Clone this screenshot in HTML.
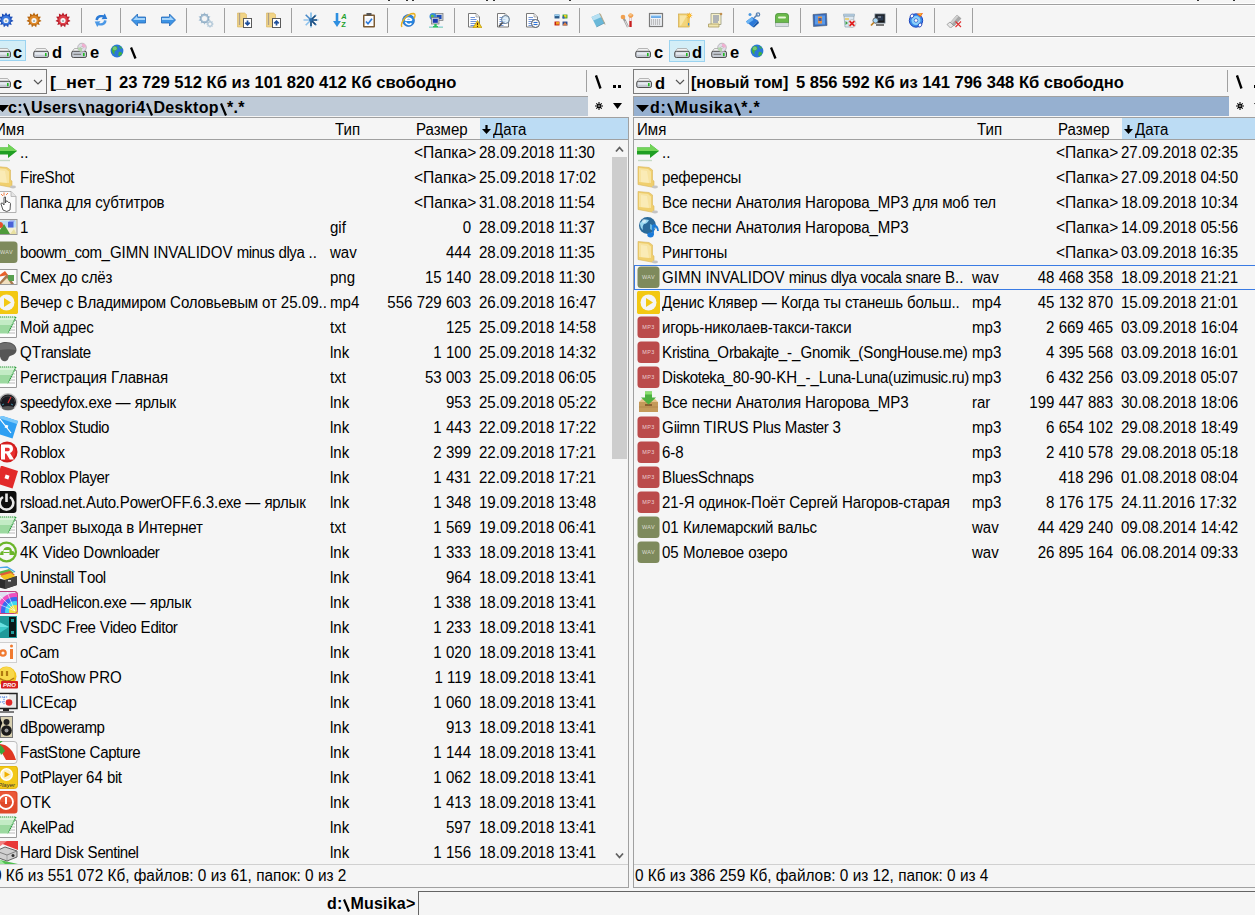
<!DOCTYPE html><html><head><meta charset="utf-8"><style>
html,body{margin:0;padding:0;width:1255px;height:915px;overflow:hidden;background:#f5f5f5;}
body>div,body>svg{position:absolute;} svg{overflow:hidden} svg.ov{overflow:visible}
.t{position:absolute;font-family:"Liberation Sans",sans-serif;font-size:16px;line-height:25px;color:#000;white-space:pre;transform-origin:0 0;}
.lat{letter-spacing:-0.5px} .cyr{letter-spacing:-0.2px}
.b{position:absolute;font-family:"Liberation Sans",sans-serif;font-size:16px;font-weight:bold;line-height:20px;color:#000;white-space:pre;transform-origin:0 0;}

</style></head><body>
<div style="left:0px;top:3px;width:1255px;height:1px;background:#fdfdfd"></div>
<div style="left:0px;top:4px;width:1255px;height:1px;background:#a0a0a0"></div>
<div style="left:0px;top:5px;width:1255px;height:1px;background:#fdfdfd"></div>
<div style="left:0px;top:35px;width:1255px;height:1px;background:#fdfdfd"></div>
<div style="left:0px;top:36px;width:1255px;height:1px;background:#a0a0a0"></div>
<div style="left:0px;top:37px;width:1255px;height:1px;background:#fdfdfd"></div>
<div style="left:0px;top:65px;width:1255px;height:1px;background:#fdfdfd"></div>
<div style="left:0px;top:66px;width:1255px;height:1px;background:#a0a0a0"></div>
<div style="left:0px;top:67px;width:1255px;height:1px;background:#fdfdfd"></div>
<div style="left:388px;top:0px;width:2px;height:1px;background:#333"></div>
<div style="left:406px;top:0px;width:2px;height:1px;background:#333"></div>
<div style="left:412px;top:0px;width:2px;height:1px;background:#333"></div>
<div style="left:486px;top:0px;width:2px;height:1px;background:#333"></div>
<div style="left:493px;top:0px;width:2px;height:1px;background:#333"></div>
<div style="left:569px;top:0px;width:2px;height:1px;background:#333"></div>
<div style="left:1197px;top:0px;width:2px;height:1px;background:#333"></div>
<div style="left:1233px;top:0px;width:2px;height:1px;background:#333"></div>
<svg style="left:-2px;top:12px" width="16" height="16" viewBox="0 0 16 16"><polygon points="8.00,0.40 9.47,3.01 12.11,1.61 11.93,4.59 14.91,4.84 13.15,7.26 15.52,9.08 12.73,10.16 13.74,12.98 10.81,12.37 10.14,15.29 8.00,13.20 5.86,15.29 5.19,12.37 2.26,12.98 3.27,10.16 0.48,9.08 2.85,7.26 1.09,4.84 4.07,4.59 3.89,1.61 6.53,3.01" fill="#1d4fb8"/><circle cx="8" cy="8" r="4.6" fill="#3d7ae0"/><circle cx="8" cy="8.5" r="2.6" fill="#f4f4f4"/><circle cx="8" cy="9" r="1" fill="#9aa"/></svg>
<svg style="left:26px;top:12px" width="16" height="16" viewBox="0 0 16 16"><polygon points="8.00,0.40 9.47,3.01 12.11,1.61 11.93,4.59 14.91,4.84 13.15,7.26 15.52,9.08 12.73,10.16 13.74,12.98 10.81,12.37 10.14,15.29 8.00,13.20 5.86,15.29 5.19,12.37 2.26,12.98 3.27,10.16 0.48,9.08 2.85,7.26 1.09,4.84 4.07,4.59 3.89,1.61 6.53,3.01" fill="#b8660e"/><circle cx="8" cy="8" r="4.6" fill="#e08a2a"/><circle cx="8" cy="8.5" r="2.6" fill="#f4f4f4"/><circle cx="8" cy="9" r="1" fill="#9aa"/></svg>
<svg style="left:55px;top:12px" width="16" height="16" viewBox="0 0 16 16"><polygon points="8.00,0.40 9.47,3.01 12.11,1.61 11.93,4.59 14.91,4.84 13.15,7.26 15.52,9.08 12.73,10.16 13.74,12.98 10.81,12.37 10.14,15.29 8.00,13.20 5.86,15.29 5.19,12.37 2.26,12.98 3.27,10.16 0.48,9.08 2.85,7.26 1.09,4.84 4.07,4.59 3.89,1.61 6.53,3.01" fill="#b81d2a"/><circle cx="8" cy="8" r="4.6" fill="#e0404a"/><circle cx="8" cy="8.5" r="2.6" fill="#f4f4f4"/><circle cx="8" cy="9" r="1" fill="#9aa"/></svg>
<svg style="left:93px;top:12px" width="16" height="16" viewBox="0 0 16 16"><path d="M2.5 8 C2.5 4 6.5 2 10.5 3.3 L11.8 1.5 L14.3 7 L8.5 7.2 L9.8 5.5 C7.5 4.6 5.2 5.8 5 8.2 Z" fill="#2b7bd6"/><path d="M13.5 8.5 C13.5 12.5 9.5 14.5 5.5 13.2 L4.2 15 L1.7 9.5 L7.5 9.3 L6.2 11 C8.5 11.9 10.8 10.7 11 8.3 Z" fill="#4b98e6"/></svg>
<svg style="left:131px;top:12px" width="16" height="16" viewBox="0 0 16 16"><path d="M0.5 8 L6.5 2 L6.5 5 L14.5 5 L14.5 11 L6.5 11 L6.5 14 Z" fill="#3d93e4" stroke="#2368b8" stroke-width="0.8" stroke-linejoin="round"/><path d="M2.5 7.5 L6 4 L6.5 6 L14 6 L14 8 L2.5 8Z" fill="#a6d4fa"/></svg>
<svg style="left:160px;top:12px" width="16" height="16" viewBox="0 0 16 16"><path d="M15.5 8 L9.5 2 L9.5 5 L1.5 5 L1.5 11 L9.5 11 L9.5 14 Z" fill="#3d93e4" stroke="#2368b8" stroke-width="0.8" stroke-linejoin="round"/><path d="M13.5 7.5 L10 4 L9.5 6 L2 6 L2 8 L13.5 8Z" fill="#a6d4fa"/></svg>
<svg style="left:198px;top:12px" width="16" height="16" viewBox="0 0 16 16"><polygon points="6.50,0.20 7.80,2.51 10.20,1.40 9.90,4.03 12.49,4.55 10.70,6.50 12.49,8.45 9.90,8.97 10.20,11.60 7.80,10.49 6.50,12.80 5.20,10.49 2.80,11.60 3.10,8.97 0.51,8.45 2.30,6.50 0.51,4.55 3.10,4.03 2.80,1.40 5.20,2.51" fill="#a9c2d6"/><circle cx="6.5" cy="6.5" r="2.6" fill="#f5f5f5"/><circle cx="6.5" cy="6.5" r="4.2" fill="none" stroke="#8aa6bc" stroke-width="0.8"/><polygon points="12.00,8.00 12.99,9.60 14.83,9.17 14.40,11.01 16.00,12.00 14.40,12.99 14.83,14.83 12.99,14.40 12.00,16.00 11.01,14.40 9.17,14.83 9.60,12.99 8.00,12.00 9.60,11.01 9.17,9.17 11.01,9.60" fill="#b2c8d8"/><circle cx="12" cy="12" r="1.5" fill="#f5f5f5"/></svg>
<svg style="left:236px;top:12px" width="16" height="16" viewBox="0 0 16 16"><path d="M1.5 1 h7 l2 1.5 v12.5 h-9z" fill="#f1d486" stroke="#d8b45c" stroke-width="0.6"/><path d="M3.5 1.5 v11.5" stroke="#6a6a8a" stroke-width="1.3" stroke-dasharray="1 1"/><rect x="7.5" y="6.5" width="8" height="9" fill="#fff" stroke="#5a5a5a" stroke-width="1"/><path d="M11.5 8.5 v4 M9.3 10.7 l2.2 2.2 l2.2 -2.2" stroke="#1f4f9a" stroke-width="1.7" fill="none"/></svg>
<svg style="left:265px;top:12px" width="16" height="16" viewBox="0 0 16 16"><path d="M1.5 1 h7 l2 1.5 v12.5 h-9z" fill="#f1d486" stroke="#d8b45c" stroke-width="0.6"/><path d="M3.5 1.5 v11.5" stroke="#6a6a8a" stroke-width="1.3" stroke-dasharray="1 1"/><rect x="7.5" y="6.5" width="8" height="9" fill="#fff" stroke="#5a5a5a" stroke-width="1"/><path d="M11.5 13.5 v-4 M9.3 11.3 l2.2 -2.2 l2.2 2.2" stroke="#1f4f9a" stroke-width="1.7" fill="none"/></svg>
<svg style="left:303px;top:12px" width="16" height="16" viewBox="0 0 16 16"><g stroke-width="1.6"><path d="M8 0.5v15" stroke="#7ab8e8"/><path d="M0.5 8h15" stroke="#9ac8ee"/><path d="M2.7 2.7l10.6 10.6" stroke="#4a8ac8"/><path d="M13.3 2.7L2.7 13.3" stroke="#8ac0ec"/></g><path d="M8 8 L14 8 M8 8 L12.5 12.5 M8 8 L8 14 M8 8 L12.5 3.5" stroke="#1a4a7a" stroke-width="1.6"/><circle cx="8" cy="8" r="1.8" fill="#2a6aa8"/></svg>
<svg style="left:332px;top:12px" width="16" height="16" viewBox="0 0 16 16"><path d="M5 1 v10" stroke="#2e8fe0" stroke-width="2.6"/><path d="M1 9 L5 15 L9 9Z" fill="#2e8fe0"/><text x="9.3" y="7" font-size="7.5" font-weight="bold" font-style="italic" font-family="Liberation Sans" fill="#22a02a">A</text><text x="9.3" y="15.3" font-size="7.5" font-weight="bold" font-family="Liberation Sans" fill="#22a02a">Z</text></svg>
<svg style="left:361px;top:12px" width="16" height="16" viewBox="0 0 16 16"><rect x="2" y="2.5" width="12" height="13" rx="1" fill="#7b5a32"/><rect x="3.5" y="4" width="9" height="10" fill="#fff"/><path d="M4.5 7h7M4.5 9h7M4.5 11h7" stroke="#d8e0f0" stroke-width="0.7"/><rect x="5.5" y="1" width="5" height="2.5" fill="#555"/><path d="M5 9.5 l2 2.3 l4 -5" stroke="#2a78d8" stroke-width="1.6" fill="none"/></svg>
<svg style="left:400px;top:12px" width="16" height="16" viewBox="0 0 16 16"><circle cx="8.5" cy="8.5" r="6" fill="#2a86e0"/><circle cx="8.5" cy="8.5" r="6" fill="none" stroke="#1a5ab0" stroke-width="0.6"/><path d="M5.3 8.2 h6.5 M5.5 8.5 a3.3 3.3 0 0 1 6.3 -0.3" stroke="#fff" stroke-width="1.6" fill="none"/><path d="M5.6 9.8 a3.3 3.3 0 0 0 5.8 1.4" stroke="#fff" stroke-width="1.5" fill="none"/><path d="M2 15 C-0.5 11 7 1.5 13.5 1.5 C16 2 15 5 13.8 6.5" stroke="#e8b020" stroke-width="1.4" fill="none"/></svg>
<svg style="left:428px;top:12px" width="16" height="16" viewBox="0 0 16 16"><rect x="7" y="1.5" width="8" height="7" fill="#c8d0d8" stroke="#777" stroke-width="0.7"/><rect x="8.5" y="3" width="5" height="4" fill="#1a4ab8"/><circle cx="5" cy="4.5" r="3.5" fill="#3a8ad8"/><path d="M3 3 q2 -1 3 1 q-1 2 -3 1z" fill="#5ac040"/><rect x="3.5" y="5.5" width="7.5" height="6.5" fill="#d0d8e0" stroke="#777" stroke-width="0.7"/><rect x="4.8" y="6.8" width="5" height="4" fill="#1a3ab0"/><rect x="6.3" y="12" width="2.4" height="2" fill="#2ac060"/><path d="M1 14.8 H15" stroke="#2ac060" stroke-width="1.6"/><path d="M1 14.8 H5 M10 14.8 H15" stroke="#bde" stroke-width="1.6"/></svg>
<svg style="left:466px;top:12px" width="16" height="16" viewBox="0 0 16 16"><path d="M2.5 1.5 h7.5 l3.5 3.5 v10 h-11z" fill="#fff" stroke="#6a6a6a" stroke-width="0.9"/><path d="M10 1.5 v3.5 h3.5" fill="#e8e8e8" stroke="#8a8a8a" stroke-width="0.6"/><path d="M4.5 5.5h4.5M4.5 7.5h6M4.5 9.5h6M4.5 11.5h6M4.5 13.5h4" stroke="#4a7ad0" stroke-width="0.8"/><path d="M11.5 8.5 L16 15.8 H7 Z" fill="#f4d020" stroke="#b89000" stroke-width="0.7" stroke-linejoin="round"/><path d="M11.5 10.8v2.4M11.5 14v0.9" stroke="#5a1a00" stroke-width="1.1"/></svg>
<svg style="left:495px;top:12px" width="16" height="16" viewBox="0 0 16 16"><path d="M2.5 1.5 h7.5 l3.5 3.5 v10 h-11z" fill="#fff" stroke="#6a6a6a" stroke-width="0.9"/><path d="M10 1.5 v3.5 h3.5" fill="#e8e8e8" stroke="#8a8a8a" stroke-width="0.6"/><path d="M4.5 5.5h4.5M4.5 7.5h6M4.5 9.5h6M4.5 11.5h6M4.5 13.5h4" stroke="#4a7ad0" stroke-width="0.8"/><circle cx="10.5" cy="7.5" r="4" fill="#d8ecfa" fill-opacity="0.75" stroke="#607890" stroke-width="1"/><path d="M7.5 10.5 L4 14.5" stroke="#505050" stroke-width="1.6"/></svg>
<svg style="left:524px;top:12px" width="16" height="16" viewBox="0 0 16 16"><path d="M2.5 1.5 h7.5 l3.5 3.5 v10 h-11z" fill="#fff" stroke="#6a6a6a" stroke-width="0.9"/><path d="M10 1.5 v3.5 h3.5" fill="#e8e8e8" stroke="#8a8a8a" stroke-width="0.6"/><path d="M4.5 5.5h4.5M4.5 7.5h6M4.5 9.5h6M4.5 11.5h6M4.5 13.5h4" stroke="#4a7ad0" stroke-width="0.8"/><circle cx="11.5" cy="11.5" r="4" fill="#f6f6f6" stroke="#505a68" stroke-width="1"/><path d="M9.5 10.5h4M9.5 12.5h4" stroke="#2a72d8" stroke-width="1.2"/></svg>
<svg style="left:553px;top:12px" width="16" height="16" viewBox="0 0 16 16"><rect x="1" y="2" width="6" height="5" fill="#fff"/><rect x="9" y="2" width="6" height="5" fill="#fff"/><rect x="1" y="9" width="6" height="5" fill="#fff"/><rect x="9" y="9" width="6" height="5" fill="#fff"/><rect x="1.5" y="2.5" width="5" height="4" fill="#2a5a8a"/><rect x="1.5" y="2.5" width="5" height="1.6" fill="#9ad0f0"/><rect x="9.5" y="2.5" width="5" height="4" fill="#40a030"/><rect x="11" y="3" width="2.5" height="2.5" fill="#f0d020"/><rect x="9.5" y="4.5" width="2" height="2" fill="#3050d0"/><rect x="1.5" y="9.5" width="5" height="4" fill="#c02010"/><rect x="3" y="10" width="3" height="2.5" fill="#f0a020"/><rect x="9.5" y="9.5" width="5" height="4" fill="#2a4a90"/><path d="M9.5 13.5 L12 10 L14.5 13.5Z" fill="#e08040"/></svg>
<svg style="left:590px;top:12px" width="16" height="16" viewBox="0 0 16 16"><path d="M1.5 5 L9.5 1.5 L14.5 11 L6.5 15Z" fill="#6ab8d8"/><path d="M1.5 5 L9.5 1.5 L11.5 5 L3.5 8.5Z" fill="#b6e0f2"/><path d="M9.5 1.5 L14.5 11 L15 12.5 L10.5 2Z" fill="#d8c8a0" stroke="#a89878" stroke-width="0.5"/><path d="M6.5 15 L14.5 11" stroke="#4a88a8" stroke-width="0.6"/></svg>
<svg style="left:620px;top:12px" width="16" height="16" viewBox="0 0 16 16"><path d="M3.5 6 L8 15" stroke="#9a9a9a" stroke-width="2.2"/><path d="M5 9 L8 15" stroke="#e0e0e0" stroke-width="1"/><path d="M10.5 5 L10.5 15" stroke="#c82020" stroke-width="2.4"/><path d="M10.5 5 L10.5 9" stroke="#eee" stroke-width="2.4"/><circle cx="3" cy="5" r="2.3" fill="#f0a050"/><path d="M8 3 q2.5 -3 5.5 0 q0 2 -2.5 3 q-2.5 0 -3 -3z" fill="#f0a050"/><circle cx="10.5" cy="2.5" r="1.5" fill="#f8c080"/></svg>
<svg style="left:648px;top:12px" width="16" height="16" viewBox="0 0 16 16"><rect x="1.5" y="1.5" width="13" height="13" fill="#f0f2f6" stroke="#7a7a7a" stroke-width="1.2"/><rect x="3" y="3" width="10" height="3" fill="#6aaae8"/><rect x="3" y="3" width="10" height="1.2" fill="#b8dcf8"/><path d="M3 8h10M3 10h10M3 12h10" stroke="#8a8a8a" stroke-width="1.1" stroke-dasharray="1.2 0.8"/></svg>
<svg style="left:677px;top:12px" width="16" height="16" viewBox="0 0 16 16"><rect x="1.5" y="2" width="10.5" height="13" fill="#f2d47a" stroke="#d0a848" stroke-width="0.7"/><path d="M3 3.5 h7 l-6 10 h-1z" fill="#f8e6a8"/><rect x="10.5" y="5" width="2" height="10" fill="#e8c058"/><polygon points="12.50,0.10 13.00,2.30 14.90,1.10 13.70,3.00 15.90,3.50 13.70,4.00 14.90,5.90 13.00,4.70 12.50,6.90 12.00,4.70 10.10,5.90 11.30,4.00 9.10,3.50 11.30,3.00 10.10,1.10 12.00,2.30" fill="#f5a010"/><circle cx="12.5" cy="3.5" r="1.3" fill="#ffd040"/><rect x="11" y="11" width="1.2" height="2.5" fill="#3a8ad8"/></svg>
<svg style="left:707px;top:12px" width="16" height="16" viewBox="0 0 16 16"><path d="M4 1.5 h10 v11 h-10z" fill="#f6f0c8" stroke="#9a9a80" stroke-width="0.8"/><path d="M1.5 12 h10.5 v3 h-10.5z" fill="#f0e6b0" stroke="#a89a60" stroke-width="0.8"/><path d="M6 4h6M6 6h6M6 8h6M6 10h5" stroke="#5a6aa0" stroke-width="0.9"/><circle cx="14" cy="2" r="1.3" fill="#c09050"/></svg>
<svg style="left:745px;top:12px" width="16" height="16" viewBox="0 0 16 16"><path d="M1 9.5 L7 5 L13 8.5 L7.5 15Z" fill="#2a78d8"/><path d="M1 9.5 L7 5 L8.5 8 L2.5 12Z" fill="#6ab4f4"/><path d="M7.5 15 L13 8.5 L14 11 L9 15.5Z" fill="#1a58a8"/><path d="M9 6 L12.5 2.5" stroke="#5a84b4" stroke-width="1.6"/><circle cx="13" cy="2.5" r="1.7" fill="none" stroke="#5a84b4" stroke-width="1.2"/><circle cx="5" cy="2.5" r="1.5" fill="#4a98e0"/></svg>
<svg style="left:774px;top:12px" width="16" height="16" viewBox="0 0 16 16"><path d="M1.5 4 Q1.5 1.5 4 1.5 H12 Q14.5 1.5 14.5 4 V11 H1.5Z" fill="#6ab84a" stroke="#3a8a2a" stroke-width="0.7"/><rect x="4" y="4.5" width="8" height="2" rx="1" fill="#e8f8d8"/><path d="M1.5 11 h13 v3.5 h-13z" fill="#f4f4f4" stroke="#8a9a9a" stroke-width="0.6"/><path d="M3 12v2.5M5 12v2.5M7 12v2.5M9 12v2.5M11 12v2.5M13 12v2.5" stroke="#9ab" stroke-width="0.6"/></svg>
<svg style="left:812px;top:12px" width="16" height="16" viewBox="0 0 16 16"><path d="M1 2.5 L14.5 1.5 L15 13.5 L1.5 14.5Z" fill="#3a6ab8" stroke="#4a5a70" stroke-width="0.6"/><rect x="3" y="3.5" width="10" height="9" fill="#5a9ae8"/><path d="M6 4.5h4v7h-4z" fill="#e89040"/><path d="M6.5 6h3v3h-3z" fill="#3a5aa0"/></svg>
<svg style="left:841px;top:12px" width="16" height="16" viewBox="0 0 16 16"><path d="M3 4 h10 l-1 11 h-8z" fill="#dde8f2" stroke="#8aa0b0" stroke-width="0.7"/><path d="M2.5 2 h11 v2 h-11z" fill="#b8d0e4" stroke="#8aa0b0" stroke-width="0.5"/><path d="M4.5 9 l2.5 2 -2.5 2z" fill="#3aa040"/><path d="M4 7 h4" stroke="#f0c030" stroke-width="1.2"/><circle cx="11" cy="11.5" r="4" fill="#f0f0f0" stroke="#aaa" stroke-width="0.6"/><path d="M8.6 9.1 L13.4 13.9 M13.4 9.1 L8.6 13.9" stroke="#e02020" stroke-width="1.8"/></svg>
<svg style="left:870px;top:12px" width="16" height="16" viewBox="0 0 16 16"><rect x="5" y="2" width="10" height="9" fill="#1a1a1a" stroke="#6a7a8a" stroke-width="0.8"/><rect x="6.5" y="3.5" width="7" height="5" fill="#2a3a50"/><path d="M8 5 h3" stroke="#ddd" stroke-width="0.8"/><path d="M6 12h8v2h-8z" fill="#7a7a7a"/><circle cx="5.5" cy="8.5" r="2.6" fill="#a8d8f8" stroke="#555" stroke-width="0.8"/><path d="M3.8 10.5 L1 13.5" stroke="#c08020" stroke-width="1.7"/></svg>
<svg style="left:908px;top:12px" width="16" height="16" viewBox="0 0 16 16"><circle cx="8" cy="8.5" r="6.7" fill="#3a8ae8" stroke="#1238b8" stroke-width="0.9"/><circle cx="8" cy="8.5" r="4.5" fill="#8ad0fa"/><circle cx="8" cy="8.5" r="1.8" fill="#fff" stroke="#1238b8" stroke-width="0.6"/><path d="M8.5 1.8 L15 1 L12.5 5 Z" fill="#f05a18"/><path d="M10 2 L14 1.5 L12.5 3.5Z" fill="#f8c020"/><ellipse cx="4" cy="4" rx="1.6" ry="2.2" transform="rotate(30 4 4)" fill="#fff" stroke="#1238b8" stroke-width="0.8"/><ellipse cx="12" cy="13" rx="1.6" ry="2.2" transform="rotate(30 12 13)" fill="#fff" stroke="#1238b8" stroke-width="0.8"/></svg>
<svg style="left:946px;top:12px" width="16" height="16" viewBox="0 0 16 16"><path d="M4 11 L11 3 L15 6.5 L8 14Z" fill="#a8a8a8" stroke="#888" stroke-width="0.5"/><path d="M4 11 L11 3 L12.5 4.5 L5.5 12.5Z" fill="#d0d0d0"/><path d="M1 12.5 L4 10 L7.5 13.5 L4.5 16Z" fill="#e8e8e8" stroke="#777" stroke-width="0.6"/><path d="M9.5 9.5 L15 15 M15 9.5 L9.5 15" stroke="#e03030" stroke-width="1.1"/></svg>
<div style="left:81px;top:8px;width:1px;height:25px;background:#a0a0a0"></div>
<div style="left:120px;top:8px;width:1px;height:25px;background:#a0a0a0"></div>
<div style="left:186px;top:8px;width:1px;height:25px;background:#a0a0a0"></div>
<div style="left:224px;top:8px;width:1px;height:25px;background:#a0a0a0"></div>
<div style="left:291px;top:8px;width:1px;height:25px;background:#a0a0a0"></div>
<div style="left:387px;top:8px;width:1px;height:25px;background:#a0a0a0"></div>
<div style="left:454px;top:8px;width:1px;height:25px;background:#a0a0a0"></div>
<div style="left:579px;top:8px;width:1px;height:25px;background:#a0a0a0"></div>
<div style="left:733px;top:8px;width:1px;height:25px;background:#a0a0a0"></div>
<div style="left:800px;top:8px;width:1px;height:25px;background:#a0a0a0"></div>
<div style="left:896px;top:8px;width:1px;height:25px;background:#a0a0a0"></div>
<div style="left:934px;top:8px;width:1px;height:25px;background:#a0a0a0"></div>
<div style="left:972px;top:8px;width:1px;height:25px;background:#a0a0a0"></div>
<div style="left:-10px;top:40px;width:36px;height:21px;background:#d3eef7;border:1px solid #9bd3f0;box-sizing:border-box"></div>
<div style="left:669px;top:40px;width:36px;height:22px;background:#d3eef7;border:1px solid #9bd3f0;box-sizing:border-box"></div>
<svg class="ov" style="left:-5px;top:46px" width="16" height="14" viewBox="0 0 16 14"><path d="M3.5 2.5 L12.5 2.5 L15 5.5 L1 5.5Z" fill="#f2f2f2" stroke="#9a9a9a" stroke-width="0.7"/><rect x="0.7" y="5.3" width="14.8" height="6.2" rx="1.6" fill="#c4c9d2" stroke="#505050" stroke-width="1"/><rect x="2" y="6.3" width="12.3" height="2.4" fill="#e6eaef"/><rect x="12" y="7" width="1.6" height="3.2" fill="#22b822"/></svg>
<div class="b" style="left:13px;top:43px;transform:scaleX(1.0300);line-height:20px">c</div>
<svg class="ov" style="left:33px;top:46px" width="16" height="14" viewBox="0 0 16 14"><path d="M3.5 2.5 L12.5 2.5 L15 5.5 L1 5.5Z" fill="#f2f2f2" stroke="#9a9a9a" stroke-width="0.7"/><rect x="0.7" y="5.3" width="14.8" height="6.2" rx="1.6" fill="#c4c9d2" stroke="#505050" stroke-width="1"/><rect x="2" y="6.3" width="12.3" height="2.4" fill="#e6eaef"/><rect x="12" y="7" width="1.6" height="3.2" fill="#22b822"/></svg>
<div class="b" style="left:52px;top:43px;transform:scaleX(1.0300);line-height:20px">d</div>
<svg class="ov" style="left:71px;top:46px" width="16" height="14" viewBox="0 0 16 14"><path d="M3.5 2.5 L12.5 2.5 L15 5.5 L1 5.5Z" fill="#f2f2f2" stroke="#9a9a9a" stroke-width="0.7"/><rect x="0.7" y="5.3" width="14.8" height="6.2" rx="1.6" fill="#c4c9d2" stroke="#505050" stroke-width="1"/><path d="M2.5 8.3 H10" stroke="#707070" stroke-width="1"/><rect x="12" y="7" width="1.6" height="3.2" fill="#22b822"/><circle cx="11" cy="1.5" r="4.3" fill="#e0dce8" stroke="#9a9a9a" stroke-width="0.6"/><path d="M11 -2.5 A4 4 0 0 1 15 1.5 L11 1.5Z" fill="#f0b0d0"/><path d="M7 1.5 A4 4 0 0 0 11 5.5 L11 1.5Z" fill="#b0d8a8"/><circle cx="11" cy="1.5" r="1" fill="#fff" stroke="#888" stroke-width="0.4"/></svg>
<div class="b" style="left:90px;top:43px;transform:scaleX(1.0300);line-height:20px">e</div>
<svg class="ov" style="left:635px;top:46px" width="16" height="14" viewBox="0 0 16 14"><path d="M3.5 2.5 L12.5 2.5 L15 5.5 L1 5.5Z" fill="#f2f2f2" stroke="#9a9a9a" stroke-width="0.7"/><rect x="0.7" y="5.3" width="14.8" height="6.2" rx="1.6" fill="#c4c9d2" stroke="#505050" stroke-width="1"/><rect x="2" y="6.3" width="12.3" height="2.4" fill="#e6eaef"/><rect x="12" y="7" width="1.6" height="3.2" fill="#22b822"/></svg>
<div class="b" style="left:654px;top:43px;transform:scaleX(1.0300);line-height:20px">c</div>
<svg class="ov" style="left:674px;top:46px" width="16" height="14" viewBox="0 0 16 14"><path d="M3.5 2.5 L12.5 2.5 L15 5.5 L1 5.5Z" fill="#f2f2f2" stroke="#9a9a9a" stroke-width="0.7"/><rect x="0.7" y="5.3" width="14.8" height="6.2" rx="1.6" fill="#c4c9d2" stroke="#505050" stroke-width="1"/><rect x="2" y="6.3" width="12.3" height="2.4" fill="#e6eaef"/><rect x="12" y="7" width="1.6" height="3.2" fill="#22b822"/></svg>
<div class="b" style="left:692px;top:43px;transform:scaleX(1.0300);line-height:20px">d</div>
<svg class="ov" style="left:711px;top:46px" width="16" height="14" viewBox="0 0 16 14"><path d="M3.5 2.5 L12.5 2.5 L15 5.5 L1 5.5Z" fill="#f2f2f2" stroke="#9a9a9a" stroke-width="0.7"/><rect x="0.7" y="5.3" width="14.8" height="6.2" rx="1.6" fill="#c4c9d2" stroke="#505050" stroke-width="1"/><path d="M2.5 8.3 H10" stroke="#707070" stroke-width="1"/><rect x="12" y="7" width="1.6" height="3.2" fill="#22b822"/><circle cx="11" cy="1.5" r="4.3" fill="#e0dce8" stroke="#9a9a9a" stroke-width="0.6"/><path d="M11 -2.5 A4 4 0 0 1 15 1.5 L11 1.5Z" fill="#f0b0d0"/><path d="M7 1.5 A4 4 0 0 0 11 5.5 L11 1.5Z" fill="#b0d8a8"/><circle cx="11" cy="1.5" r="1" fill="#fff" stroke="#888" stroke-width="0.4"/></svg>
<div class="b" style="left:730px;top:43px;transform:scaleX(1.0300);line-height:20px">e</div>
<svg style="left:110px;top:44px" width="14" height="14" viewBox="0 0 16 16"><circle cx="8" cy="8" r="7.3" fill="#2a78d8"/><path d="M2 5 q3 -4 6 -2 q1.5 3 -1.5 4.5 q-2.5 1 -1 4.5 q-3.5 -1.5 -3.5 -7z" fill="#40b040"/><path d="M10 9 q3.5 -0.5 4 2 q-1.5 3 -4.5 2.5z" fill="#40b040"/><path d="M10 2 q3 1 4 3 l-2 0z" fill="#40b040"/><circle cx="5.5" cy="5" r="2.2" fill="#fff" fill-opacity="0.3"/></svg>
<svg style="left:750px;top:44px" width="14" height="14" viewBox="0 0 16 16"><circle cx="8" cy="8" r="7.3" fill="#2a78d8"/><path d="M2 5 q3 -4 6 -2 q1.5 3 -1.5 4.5 q-2.5 1 -1 4.5 q-3.5 -1.5 -3.5 -7z" fill="#40b040"/><path d="M10 9 q3.5 -0.5 4 2 q-1.5 3 -4.5 2.5z" fill="#40b040"/><path d="M10 2 q3 1 4 3 l-2 0z" fill="#40b040"/><circle cx="5.5" cy="5" r="2.2" fill="#fff" fill-opacity="0.3"/></svg>
<svg style="left:130px;top:47px" width="7" height="12" viewBox="0 0 7 12"><path d="M1 0.5 L5.5 11.5" stroke="#000" stroke-width="2.3"/></svg>
<svg style="left:770px;top:47px" width="7" height="12" viewBox="0 0 7 12"><path d="M1 0.5 L5.5 11.5" stroke="#000" stroke-width="2.3"/></svg>
<div style="left:-2px;top:69px;width:49px;height:25px;border:1px solid #7a7a7a;box-sizing:border-box"></div>
<div style="left:633px;top:69px;width:56px;height:25px;border:1px solid #7a7a7a;box-sizing:border-box"></div>
<svg style="left:-5px;top:76px" width="16" height="14" viewBox="0 0 16 14"><path d="M3.5 2.5 L12.5 2.5 L15 5.5 L1 5.5Z" fill="#f2f2f2" stroke="#9a9a9a" stroke-width="0.7"/><rect x="0.7" y="5.3" width="14.8" height="6.2" rx="1.6" fill="#c4c9d2" stroke="#505050" stroke-width="1"/><rect x="2" y="6.3" width="12.3" height="2.4" fill="#e6eaef"/><rect x="12" y="7" width="1.6" height="3.2" fill="#22b822"/></svg>
<svg style="left:636px;top:76px" width="16" height="14" viewBox="0 0 16 14"><path d="M3.5 2.5 L12.5 2.5 L15 5.5 L1 5.5Z" fill="#f2f2f2" stroke="#9a9a9a" stroke-width="0.7"/><rect x="0.7" y="5.3" width="14.8" height="6.2" rx="1.6" fill="#c4c9d2" stroke="#505050" stroke-width="1"/><rect x="2" y="6.3" width="12.3" height="2.4" fill="#e6eaef"/><rect x="12" y="7" width="1.6" height="3.2" fill="#22b822"/></svg>
<div class="b" style="left:13px;top:74px;transform:scaleX(1.0300);">c</div>
<div class="b" style="left:655px;top:74px;transform:scaleX(1.0300);">d</div>
<svg style="left:33px;top:79px" width="10" height="6" viewBox="0 0 10 6"><path d="M1 1 L5 5 L9 1" stroke="#555" stroke-width="1.2" fill="none"/></svg>
<svg style="left:675px;top:79px" width="10" height="6" viewBox="0 0 10 6"><path d="M1 1 L5 5 L9 1" stroke="#555" stroke-width="1.2" fill="none"/></svg>
<div class="b" style="left:50px;top:73px;transform:scaleX(1.1300);">[_нет_]</div>
<div class="b" style="left:119px;top:73px;transform:scaleX(1.0360);">23 729 512 Кб из 101 820 412 Кб свободно</div>
<div class="b" style="left:691px;top:73px;transform:scaleX(1.0040);">[новый том]</div>
<div class="b" style="left:796px;top:73px;transform:scaleX(1.0350);">5 856 592 Кб из 141 796 348 Кб свободно</div>
<div style="left:586px;top:70px;width:1px;height:22px;background:#a0a0a0"></div>
<div style="left:1227px;top:70px;width:1px;height:22px;background:#a0a0a0"></div>
<svg style="left:595px;top:75px" width="7" height="14" viewBox="0 0 7 14"><path d="M1 0.5 L5.5 13.5" stroke="#000" stroke-width="2.3"/></svg>
<svg style="left:1236px;top:75px" width="7" height="14" viewBox="0 0 7 14"><path d="M1 0.5 L5.5 13.5" stroke="#000" stroke-width="2.3"/></svg>
<div style="left:613px;top:85px;width:3px;height:3px;background:#000"></div>
<div style="left:618px;top:85px;width:3px;height:3px;background:#000"></div>
<div style="left:1254px;top:85px;width:3px;height:3px;background:#000"></div>
<div style="left:0px;top:96px;width:588px;height:20px;background:#bfcbd8;border-top:1px solid #a0a0a0;box-sizing:border-box"></div>
<div style="left:633px;top:96px;width:596px;height:20px;background:#96b0d0;border-top:1px solid #a0a0a0;border-left:1px solid #a0a0a0;box-sizing:border-box"></div>
<svg style="left:-4px;top:105px" width="13" height="7" viewBox="0 0 13 7"><path d="M0 0 H13 L6.5 7Z" fill="#000"/></svg>
<svg style="left:636px;top:105px" width="13" height="7" viewBox="0 0 13 7"><path d="M0 0 H13 L6.5 7Z" fill="#000"/></svg>
<div class="b" style="left:8px;top:98px;letter-spacing:0.35px;">c:<svg style="display:inline-block;vertical-align:-3px;margin:0 0.5px" width="7" height="13" viewBox="0 0 7 13"><path d="M1 0.5 L6 12.5" stroke="#000" stroke-width="2.2"/></svg>Users<svg style="display:inline-block;vertical-align:-3px;margin:0 0.5px" width="7" height="13" viewBox="0 0 7 13"><path d="M1 0.5 L6 12.5" stroke="#000" stroke-width="2.2"/></svg>nagori4<svg style="display:inline-block;vertical-align:-3px;margin:0 0.5px" width="7" height="13" viewBox="0 0 7 13"><path d="M1 0.5 L6 12.5" stroke="#000" stroke-width="2.2"/></svg>Desktop<svg style="display:inline-block;vertical-align:-3px;margin:0 0.5px" width="7" height="13" viewBox="0 0 7 13"><path d="M1 0.5 L6 12.5" stroke="#000" stroke-width="2.2"/></svg>*.*</div>
<div class="b" style="left:650px;top:98px;letter-spacing:0.75px;">d:<svg style="display:inline-block;vertical-align:-3px;margin:0 0.5px" width="7" height="13" viewBox="0 0 7 13"><path d="M1 0.5 L6 12.5" stroke="#000" stroke-width="2.2"/></svg>Musika<svg style="display:inline-block;vertical-align:-3px;margin:0 0.5px" width="7" height="13" viewBox="0 0 7 13"><path d="M1 0.5 L6 12.5" stroke="#000" stroke-width="2.2"/></svg>*.*</div>
<svg style="left:595px;top:102px" width="8" height="8" viewBox="0 0 8 8"><g stroke="#000" stroke-width="1.1"><path d="M4 0v8M0 4h8M1.3 1.3l5.4 5.4M6.7 1.3l-5.4 5.4"/></g><circle cx="4" cy="4" r="1.7" fill="#000"/><circle cx="4" cy="4" r="0.8" fill="#f5f5f5"/></svg>
<svg style="left:1236px;top:102px" width="8" height="8" viewBox="0 0 8 8"><g stroke="#000" stroke-width="1.1"><path d="M4 0v8M0 4h8M1.3 1.3l5.4 5.4M6.7 1.3l-5.4 5.4"/></g><circle cx="4" cy="4" r="1.7" fill="#000"/><circle cx="4" cy="4" r="0.8" fill="#f5f5f5"/></svg>
<svg style="left:613px;top:103px" width="9" height="6" viewBox="0 0 9 6"><path d="M0 0 H9 L4.5 6Z" fill="#000"/></svg>
<svg style="left:1254px;top:103px" width="9" height="6" viewBox="0 0 9 6"><path d="M0 0 H9 L4.5 6Z" fill="#000"/></svg>
<div style="left:-9px;top:117px;width:637px;height:1px;background:#a0a0a0"></div>
<div style="left:-9px;top:887px;width:637px;height:1px;background:#a0a0a0"></div>
<div style="left:-9px;top:117px;width:1px;height:771px;background:#a0a0a0"></div>
<div style="left:628px;top:117px;width:1px;height:771px;background:#a0a0a0"></div>
<div style="left:-8px;top:139px;width:636px;height:1px;background:#a0a0a0"></div>
<div style="left:480px;top:118px;width:148px;height:21px;background:#bcdcf4"></div>
<div class="t" style="left:-5px;top:117px;transform:scaleX(0.9400);">Имя</div>
<div class="t" style="left:335px;top:117px;transform:scaleX(0.9400);">Тип</div>
<div class="t" style="left:416px;top:117px;transform:scaleX(0.9400);">Размер</div>
<svg style="left:482px;top:123px" width="9" height="12" viewBox="0 0 9 12"><path d="M4.5 2 V7" stroke="#000" stroke-width="2.2"/><path d="M0 6 H9 L4.5 11Z" fill="#000"/></svg>
<div class="t" style="left:493px;top:117px;transform:scaleX(0.9400);">Дата</div>
<svg style="left:-5px;top:141px" width="23" height="23" viewBox="0 0 23 23"><path d="M0 6.5 H13 V3 L22 10 L13 17 V13.5 H0 Z" fill="#1f9e22"/><path d="M0 6.5 H13 V3 L22 10 H0 Z" fill="#72d458"/><path d="M1 19.5 H15" stroke="#c5d9c5" stroke-width="1.4"/></svg>
<div class="t" style="left:20px;top:140px;transform:scaleX(0.94)">..</div>
<div class="t" style="left:414px;top:140px;transform:scaleX(0.9729)">&lt;Папка&gt;</div>
<div class="t" style="left:479px;top:140px;transform:scaleX(0.9400);">28.09.2018 11:30</div>
<svg style="left:-5px;top:166px" width="23" height="23" viewBox="0 0 23 23"><path d="M1 0.5 L12 1.5 L15.5 4 L15.5 14 L17 15 L17 21.5 L1 18.5 Z" fill="#f0cf6e" stroke="#d8b55a" stroke-width="0.6"/><path d="M2 2 L11 3 L14 5.5 L14 17 L2 16 Z" fill="#f7e3a0"/><path d="M4 4 L10 5 L12 17 L4 16Z" fill="#fbeebf" fill-opacity="0.7"/><ellipse cx="18" cy="21" rx="3" ry="1.4" fill="#c4c4c4"/></svg>
<div class="t" style="left:20px;top:165px;transform:scaleX(0.94)">F<span class="lat">ire</span>S<span class="lat">hot</span></div>
<div class="t" style="left:414px;top:165px;transform:scaleX(0.9729)">&lt;Папка&gt;</div>
<div class="t" style="left:479px;top:165px;transform:scaleX(0.9400);">25.09.2018 17:02</div>
<svg style="left:-5px;top:191px" width="23" height="23" viewBox="0 0 23 23"><path d="M4 0.5 h12 l5 5 v16 h-17z" fill="#fafafa" stroke="#a8a8a8" stroke-width="0.9"/><path d="M16 0.5 v5 h5" fill="#e4e4e4" stroke="#a8a8a8" stroke-width="0.7"/><path d="M8 19 L6 13 Q6 11.5 7.5 12 L9 14 V7 Q9 5.5 10.5 6 V12 L11 10 Q12.5 9.5 13 11 L13.5 11.5 Q15 11 15.5 12.5 L15 19 Q12 22 8 19Z" fill="#fff" stroke="#444" stroke-width="0.9"/><path d="M9 1.5 v3 M6 3 l2 2 M13 2 l-2 2" stroke="#f07030" stroke-width="0.9"/></svg>
<div class="t" style="left:20px;top:190px;transform:scaleX(0.94)">П<span class="cyr">апка</span> <span class="cyr">для</span> <span class="cyr">субтитров</span></div>
<div class="t" style="left:414px;top:190px;transform:scaleX(0.9729)">&lt;Папка&gt;</div>
<div class="t" style="left:479px;top:190px;transform:scaleX(0.9400);">31.08.2018 11:54</div>
<svg style="left:-5px;top:216px" width="23" height="23" viewBox="0 0 23 23"><rect x="1.5" y="3.5" width="20.5" height="15" fill="#f4f0d8" stroke="#9a9a9a" stroke-width="1"/><rect x="2.5" y="4.5" width="18.5" height="7" fill="#b8dcf6"/><path d="M2 18 L9 8 L15 18Z" fill="#4e9a3a"/><circle cx="5" cy="9" r="3" fill="#e8502a"/><rect x="13" y="6" width="5.5" height="5.5" fill="#4a62d8"/><path d="M13 6 l2 -1.5 h5.5 l-2 1.5z" fill="#8a9af0"/><path d="M15 18 L19 13 L21.5 18Z" fill="#e8e0a0"/></svg>
<div class="t" style="left:20px;top:215px;transform:scaleX(0.94)">1</div>
<div class="t" style="left:330px;top:215px;transform:scaleX(0.9400);">gif</div>
<div class="t" style="left:171px;top:215px;width:300px;text-align:right;transform-origin:100% 0;transform:scaleX(0.94);">0</div>
<div class="t" style="left:479px;top:215px;transform:scaleX(0.9400);">28.09.2018 11:37</div>
<svg style="left:-5px;top:241px" width="23" height="23" viewBox="0 0 23 23"><rect x="0.5" y="0.5" width="22" height="21.5" rx="3.5" fill="#7e8a5c"/><text x="11.5" y="12.8" font-size="5.5" text-anchor="middle" font-family="Liberation Sans" fill="#fff" fill-opacity="0.72" letter-spacing="0.4">WAV</text></svg>
<div class="t" style="left:20px;top:240px;transform:scaleX(0.94)"><span class="lat">boowm</span>_<span class="lat">com</span>_GIMN INVALIDOV <span class="lat">minus</span> <span class="lat">dlya</span> ..</div>
<div class="t" style="left:330px;top:240px;transform:scaleX(0.9400);">wav</div>
<div class="t" style="left:171px;top:240px;width:300px;text-align:right;transform-origin:100% 0;transform:scaleX(0.94);">444</div>
<div class="t" style="left:479px;top:240px;transform:scaleX(0.9400);">28.09.2018 11:35</div>
<svg style="left:-5px;top:266px" width="23" height="23" viewBox="0 0 23 23"><rect x="1.5" y="3.5" width="20.5" height="15" fill="#fafafa" stroke="#9a9a9a" stroke-width="1"/><path d="M2 11 L10 5 L13 9Z" fill="#e8602a"/><path d="M3 18 L12 8 L19 18Z" fill="#a87a50"/><path d="M13 9 h6 v6 h-6z" fill="#58a050"/><path d="M6 18 L12 12 L16 18Z" fill="#f0e0c0"/></svg>
<div class="t" style="left:20px;top:265px;transform:scaleX(0.94)">С<span class="cyr">мех</span> <span class="cyr">до</span> <span class="cyr">слёз</span></div>
<div class="t" style="left:330px;top:265px;transform:scaleX(0.9400);">png</div>
<div class="t" style="left:171px;top:265px;width:300px;text-align:right;transform-origin:100% 0;transform:scaleX(0.94);">15 140</div>
<div class="t" style="left:479px;top:265px;transform:scaleX(0.9400);">28.09.2018 11:30</div>
<svg style="left:-5px;top:291px" width="23" height="23" viewBox="0 0 23 23"><rect x="-0.5" y="-0.5" width="24" height="24" rx="4" fill="#f3c812"/><circle cx="11.5" cy="11.5" r="8" fill="#f4f4f4"/><path d="M9 7 L16 11.5 L9 16Z" fill="#f3c812"/></svg>
<div class="t" style="left:20px;top:290px;transform:scaleX(0.94)">В<span class="cyr">ечер</span> <span class="cyr">с</span> В<span class="cyr">ладимиром</span> С<span class="cyr">оловьевым</span> <span class="cyr">от</span> 25.09..</div>
<div class="t" style="left:330px;top:290px;transform:scaleX(0.9400);">mp4</div>
<div class="t" style="left:171px;top:290px;width:300px;text-align:right;transform-origin:100% 0;transform:scaleX(0.94);">556 729 603</div>
<div class="t" style="left:479px;top:290px;transform:scaleX(0.9400);">26.09.2018 16:47</div>
<svg style="left:-5px;top:316px" width="23" height="23" viewBox="0 0 23 23"><path d="M6.5 4.5 H21.5 V21.5 H4.5 V18" fill="#fdfdfd" stroke="#9a9a9a" stroke-width="1"/><path d="M17 8h3M16 11h4M15 14h5M14 17h6" stroke="#aaa" stroke-width="0.8"/><path d="M3 1 L21 1 L13 17.5 L-2 17.5 Z" fill="#9cd9a0"/><path d="M3 1 L21 1 L17 9 L1 9Z" fill="#c2ebc4"/><path d="M3 1 L21 1 L19.5 4 L2 4Z" fill="#daf4da"/><path d="M3 1 L21 1 L13 17.5" stroke="#2a9a3a" stroke-width="1.2" fill="none" stroke-dasharray="1.3 0.7"/></svg>
<div class="t" style="left:20px;top:315px;transform:scaleX(0.94)">М<span class="cyr">ой</span> <span class="cyr">адрес</span></div>
<div class="t" style="left:330px;top:315px;transform:scaleX(0.9400);">txt</div>
<div class="t" style="left:171px;top:315px;width:300px;text-align:right;transform-origin:100% 0;transform:scaleX(0.94);">125</div>
<div class="t" style="left:479px;top:315px;transform:scaleX(0.9400);">25.09.2018 14:58</div>
<svg style="left:-5px;top:341px" width="23" height="23" viewBox="0 0 23 23"><path d="M11 1 C4 1 0 5 0 10 C0 14 3 15.5 5 15.5 C6 20 9 21 11 20 C14 19 13 16 15 15 C19 14 21.5 12 21.5 9 C21.5 4 17 1 11 1Z" fill="#555"/><path d="M11 2 C16 2 20.5 4.5 20.5 9 C15 8 8 8 1 10 C1 5 5 2 11 2Z" fill="#6e6e6e"/></svg>
<div class="t" style="left:20px;top:340px;transform:scaleX(0.94)">QT<span class="lat">ranslate</span></div>
<div class="t" style="left:330px;top:340px;transform:scaleX(0.9400);">lnk</div>
<div class="t" style="left:171px;top:340px;width:300px;text-align:right;transform-origin:100% 0;transform:scaleX(0.94);">1 100</div>
<div class="t" style="left:479px;top:340px;transform:scaleX(0.9400);">25.09.2018 14:32</div>
<svg style="left:-5px;top:366px" width="23" height="23" viewBox="0 0 23 23"><path d="M6.5 4.5 H21.5 V21.5 H4.5 V18" fill="#fdfdfd" stroke="#9a9a9a" stroke-width="1"/><path d="M17 8h3M16 11h4M15 14h5M14 17h6" stroke="#aaa" stroke-width="0.8"/><path d="M3 1 L21 1 L13 17.5 L-2 17.5 Z" fill="#9cd9a0"/><path d="M3 1 L21 1 L17 9 L1 9Z" fill="#c2ebc4"/><path d="M3 1 L21 1 L19.5 4 L2 4Z" fill="#daf4da"/><path d="M3 1 L21 1 L13 17.5" stroke="#2a9a3a" stroke-width="1.2" fill="none" stroke-dasharray="1.3 0.7"/></svg>
<div class="t" style="left:20px;top:365px;transform:scaleX(0.94)">Р<span class="cyr">егистрация</span> Г<span class="cyr">лавная</span></div>
<div class="t" style="left:330px;top:365px;transform:scaleX(0.9400);">txt</div>
<div class="t" style="left:171px;top:365px;width:300px;text-align:right;transform-origin:100% 0;transform:scaleX(0.94);">53 003</div>
<div class="t" style="left:479px;top:365px;transform:scaleX(0.9400);">25.09.2018 06:05</div>
<svg style="left:-5px;top:391px" width="23" height="23" viewBox="0 0 23 23"><ellipse cx="13" cy="11" rx="9.5" ry="9" fill="#bbb"/><ellipse cx="13" cy="11" rx="8" ry="7.5" fill="#1a1a20"/><path d="M6 11 A7 6 0 0 1 20 11" stroke="#444" stroke-width="1" fill="none"/><path d="M13 12 L16 6" stroke="#e03030" stroke-width="1.3"/><path d="M7 14 l2 -1 M18 14 l-2 -1" stroke="#3a8aa0" stroke-width="1"/><ellipse cx="13" cy="17" rx="6" ry="2" fill="#555"/></svg>
<div class="t" style="left:20px;top:390px;transform:scaleX(0.94)"><span class="lat">speedyfox</span>.<span class="lat">exe</span> — <span class="cyr">ярлык</span></div>
<div class="t" style="left:330px;top:390px;transform:scaleX(0.9400);">lnk</div>
<div class="t" style="left:171px;top:390px;width:300px;text-align:right;transform-origin:100% 0;transform:scaleX(0.94);">953</div>
<div class="t" style="left:479px;top:390px;transform:scaleX(0.9400);">25.09.2018 05:22</div>
<svg style="left:-5px;top:416px" width="23" height="23" viewBox="0 0 23 23"><path d="M6 -0.5 L23 5 L17.5 22.5 L0 17Z" fill="#2f9ff2"/><path d="M6 -0.5 L23 5 L22 8 L5 2.5Z" fill="#7ac8fa"/><path d="M5 3 L16 17" stroke="#fff" stroke-width="1.2"/><rect x="10" y="9" width="3" height="3" fill="#fff" transform="rotate(17 11.5 10.5)"/></svg>
<div class="t" style="left:20px;top:415px;transform:scaleX(0.94)">R<span class="lat">oblox</span> S<span class="lat">tudio</span></div>
<div class="t" style="left:330px;top:415px;transform:scaleX(0.9400);">lnk</div>
<div class="t" style="left:171px;top:415px;width:300px;text-align:right;transform-origin:100% 0;transform:scaleX(0.94);">1 443</div>
<div class="t" style="left:479px;top:415px;transform:scaleX(0.9400);">22.09.2018 17:22</div>
<svg style="left:-5px;top:441px" width="23" height="23" viewBox="0 0 23 23"><circle cx="12" cy="11" r="10.5" fill="#d01c1c"/><circle cx="12" cy="11" r="8.5" fill="#e83030"/><path d="M6 3.5 h7.5 q4.5 0 4.5 4.3 q0 3 -3 4.2 l4 6.5 h-4.2 l-3.6 -6 h-1.2 v6 h-4z M10 6.8 v3.4 h3.2 q1.6 0 1.6 -1.7 q0 -1.7 -1.6 -1.7z" fill="#fff"/></svg>
<div class="t" style="left:20px;top:440px;transform:scaleX(0.94)">R<span class="lat">oblox</span></div>
<div class="t" style="left:330px;top:440px;transform:scaleX(0.9400);">lnk</div>
<div class="t" style="left:171px;top:440px;width:300px;text-align:right;transform-origin:100% 0;transform:scaleX(0.94);">2 399</div>
<div class="t" style="left:479px;top:440px;transform:scaleX(0.9400);">22.09.2018 17:21</div>
<svg style="left:-5px;top:466px" width="23" height="23" viewBox="0 0 23 23"><path d="M6 -0.5 L23 5 L17.5 22.5 L0 17Z" fill="#e22a2a"/><rect x="10" y="9" width="4" height="4" fill="#fff" transform="rotate(17 12 11)"/></svg>
<div class="t" style="left:20px;top:465px;transform:scaleX(0.94)">R<span class="lat">oblox</span> P<span class="lat">layer</span></div>
<div class="t" style="left:330px;top:465px;transform:scaleX(0.9400);">lnk</div>
<div class="t" style="left:171px;top:465px;width:300px;text-align:right;transform-origin:100% 0;transform:scaleX(0.94);">1 431</div>
<div class="t" style="left:479px;top:465px;transform:scaleX(0.9400);">22.09.2018 17:21</div>
<svg style="left:-5px;top:491px" width="23" height="23" viewBox="0 0 23 23"><rect x="0" y="0" width="21.5" height="22" rx="3" fill="#0e0e0e"/><path d="M8 6 A6.8 6.8 0 1 0 15 6" stroke="#e8e8e8" stroke-width="2.6" fill="none"/><path d="M11.5 2.5 v8.5" stroke="#e8e8e8" stroke-width="2.6"/></svg>
<div class="t" style="left:20px;top:490px;transform:scaleX(0.94)"><span class="lat">rsload</span>.<span class="lat">net</span>.A<span class="lat">uto</span>.P<span class="lat">ower</span>OFF.6.3.<span class="lat">exe</span> — <span class="cyr">ярлык</span></div>
<div class="t" style="left:330px;top:490px;transform:scaleX(0.9400);">lnk</div>
<div class="t" style="left:171px;top:490px;width:300px;text-align:right;transform-origin:100% 0;transform:scaleX(0.94);">1 348</div>
<div class="t" style="left:479px;top:490px;transform:scaleX(0.9400);">19.09.2018 13:48</div>
<svg style="left:-5px;top:516px" width="23" height="23" viewBox="0 0 23 23"><path d="M6.5 4.5 H21.5 V21.5 H4.5 V18" fill="#fdfdfd" stroke="#9a9a9a" stroke-width="1"/><path d="M17 8h3M16 11h4M15 14h5M14 17h6" stroke="#aaa" stroke-width="0.8"/><path d="M3 1 L21 1 L13 17.5 L-2 17.5 Z" fill="#9cd9a0"/><path d="M3 1 L21 1 L17 9 L1 9Z" fill="#c2ebc4"/><path d="M3 1 L21 1 L19.5 4 L2 4Z" fill="#daf4da"/><path d="M3 1 L21 1 L13 17.5" stroke="#2a9a3a" stroke-width="1.2" fill="none" stroke-dasharray="1.3 0.7"/></svg>
<div class="t" style="left:20px;top:515px;transform:scaleX(0.94)">З<span class="cyr">апрет</span> <span class="cyr">выхода</span> <span class="cyr">в</span> И<span class="cyr">нтернет</span></div>
<div class="t" style="left:330px;top:515px;transform:scaleX(0.9400);">txt</div>
<div class="t" style="left:171px;top:515px;width:300px;text-align:right;transform-origin:100% 0;transform:scaleX(0.94);">1 569</div>
<div class="t" style="left:479px;top:515px;transform:scaleX(0.9400);">19.09.2018 06:41</div>
<svg style="left:-5px;top:541px" width="23" height="23" viewBox="0 0 23 23"><circle cx="11.5" cy="11" r="10.5" fill="#6ab52a"/><circle cx="11.5" cy="11" r="8.3" fill="#f6f6f6"/><path d="M5 14 q0 -4 3 -4 q1 -4 4.5 -4 q4 0 4.5 4 q3 0 3 4z" fill="#6ab52a"/><rect x="8.5" y="9" width="6" height="5" fill="#f6f6f6"/><path d="M8.5 11.5h6" stroke="#6ab52a" stroke-width="1"/></svg>
<div class="t" style="left:20px;top:540px;transform:scaleX(0.94)">4K V<span class="lat">ideo</span> D<span class="lat">ownloader</span></div>
<div class="t" style="left:330px;top:540px;transform:scaleX(0.9400);">lnk</div>
<div class="t" style="left:171px;top:540px;width:300px;text-align:right;transform-origin:100% 0;transform:scaleX(0.94);">1 333</div>
<div class="t" style="left:479px;top:540px;transform:scaleX(0.9400);">18.09.2018 13:41</div>
<svg style="left:-5px;top:566px" width="23" height="23" viewBox="0 0 23 23"><path d="M0 2 L12 1 L20 6" stroke="#4aa8e8" stroke-width="1.4" fill="none"/><path d="M3 6 L14 3 L19 7 L8 10Z" fill="#58b848"/><path d="M4 8 L15 5 L20 9 L9 12Z" fill="#e05a3a"/><path d="M5 10 L16 7 L21 11 L10 14Z" fill="#f0c020"/><path d="M2 12 L10 14 L22 10 L22 19 L10 23 L2 21Z" fill="#2c2c2c"/><path d="M10 14 L22 10 L22 19 L10 23Z" fill="#444"/><rect x="13" y="14" width="3" height="1.5" fill="#ddd"/></svg>
<div class="t" style="left:20px;top:565px;transform:scaleX(0.94)">U<span class="lat">ninstall</span> T<span class="lat">ool</span></div>
<div class="t" style="left:330px;top:565px;transform:scaleX(0.9400);">lnk</div>
<div class="t" style="left:171px;top:565px;width:300px;text-align:right;transform-origin:100% 0;transform:scaleX(0.94);">964</div>
<div class="t" style="left:479px;top:565px;transform:scaleX(0.9400);">18.09.2018 13:41</div>
<svg style="left:-5px;top:591px" width="23" height="23" viewBox="0 0 23 23"><rect x="0.5" y="0.5" width="22" height="22" rx="3" fill="#e0e0f0" stroke="#c04080" stroke-width="1"/><circle cx="20" cy="20" r="18" fill="#f050c0"/><circle cx="20" cy="20" r="14" fill="#3a6af0"/><circle cx="20" cy="20" r="10" fill="#40d8f0"/><circle cx="20" cy="20" r="6" fill="#f0e040"/><path d="M2 2 L20 20 M12 1 L20 20 M1 12 L20 20" stroke="#fff" stroke-width="1" stroke-opacity="0.6"/><rect x="0.5" y="0.5" width="22" height="22" rx="3" fill="none" stroke="#c04080" stroke-width="1"/></svg>
<div class="t" style="left:20px;top:590px;transform:scaleX(0.94)">L<span class="lat">oad</span>H<span class="lat">elicon</span>.<span class="lat">exe</span> — <span class="cyr">ярлык</span></div>
<div class="t" style="left:330px;top:590px;transform:scaleX(0.9400);">lnk</div>
<div class="t" style="left:171px;top:590px;width:300px;text-align:right;transform-origin:100% 0;transform:scaleX(0.94);">1 338</div>
<div class="t" style="left:479px;top:590px;transform:scaleX(0.9400);">18.09.2018 13:41</div>
<svg style="left:-5px;top:616px" width="23" height="23" viewBox="0 0 23 23"><rect x="0" y="0" width="22" height="22" fill="#1f9a9a"/><rect x="14" y="1" width="7" height="20" fill="#0a1a1a"/><path d="M16 3h3v3h-3zM16 15h3v3h-3z" fill="#1f9a9a"/><path d="M0 4 L14 11 L0 20Z" fill="#3cc8c8"/><path d="M0 4 L14 11 L0 11Z" fill="#6ae0e0"/></svg>
<div class="t" style="left:20px;top:615px;transform:scaleX(0.94)">VSDC F<span class="lat">ree</span> V<span class="lat">ideo</span> E<span class="lat">ditor</span></div>
<div class="t" style="left:330px;top:615px;transform:scaleX(0.9400);">lnk</div>
<div class="t" style="left:171px;top:615px;width:300px;text-align:right;transform-origin:100% 0;transform:scaleX(0.94);">1 233</div>
<div class="t" style="left:479px;top:615px;transform:scaleX(0.9400);">18.09.2018 13:41</div>
<svg style="left:-5px;top:641px" width="23" height="23" viewBox="0 0 23 23"><rect x="2.5" y="1.5" width="19" height="20" fill="#fafafa" stroke="#cfcfcf" stroke-width="1"/><circle cx="8" cy="12" r="3.8" fill="#f07a30"/><circle cx="8" cy="12" r="1.6" fill="#fafafa"/><rect x="15" y="8" width="3" height="10" fill="#f07a30"/><circle cx="16.5" cy="5" r="1.5" fill="#f07a30"/></svg>
<div class="t" style="left:20px;top:640px;transform:scaleX(0.94)"><span class="lat">o</span>C<span class="lat">am</span></div>
<div class="t" style="left:330px;top:640px;transform:scaleX(0.9400);">lnk</div>
<div class="t" style="left:171px;top:640px;width:300px;text-align:right;transform-origin:100% 0;transform:scaleX(0.94);">1 020</div>
<div class="t" style="left:479px;top:640px;transform:scaleX(0.9400);">18.09.2018 13:41</div>
<svg style="left:-5px;top:666px" width="23" height="23" viewBox="0 0 23 23"><circle cx="11.5" cy="10.5" r="10" fill="#f2c41e"/><circle cx="11.5" cy="9" r="8" fill="#f8d84a"/><path d="M7 5 v5 M12 5 v5" stroke="#b07810" stroke-width="2.2"/><path d="M4 12 q8 6 15 0" stroke="#b07810" stroke-width="1.4" fill="none"/><rect x="6" y="15" width="17" height="7.5" rx="1" fill="#d82020"/><text x="14.5" y="21.3" font-size="6" font-weight="bold" font-style="italic" text-anchor="middle" font-family="Liberation Sans" fill="#fff">PRO</text></svg>
<div class="t" style="left:20px;top:665px;transform:scaleX(0.94)">F<span class="lat">oto</span>S<span class="lat">how</span> PRO</div>
<div class="t" style="left:330px;top:665px;transform:scaleX(0.9400);">lnk</div>
<div class="t" style="left:171px;top:665px;width:300px;text-align:right;transform-origin:100% 0;transform:scaleX(0.94);">1 119</div>
<div class="t" style="left:479px;top:665px;transform:scaleX(0.9400);">18.09.2018 13:41</div>
<svg style="left:-5px;top:691px" width="23" height="23" viewBox="0 0 23 23"><rect x="1" y="2.5" width="21" height="15" fill="#e8e8e8" stroke="#222" stroke-width="1.5"/><rect x="2" y="3.5" width="12" height="12" fill="#fafafa"/><path d="M3 6h10M3 11h6M9 6v8" stroke="#2a6ad8" stroke-width="0.9" stroke-dasharray="1.2 0.8"/><circle cx="14" cy="11.5" r="3.3" fill="#e02828"/><path d="M8 18h6v2h-6z" fill="#222"/><path d="M3 21h16" stroke="#555" stroke-width="1.5"/></svg>
<div class="t" style="left:20px;top:690px;transform:scaleX(0.94)">LICE<span class="lat">cap</span></div>
<div class="t" style="left:330px;top:690px;transform:scaleX(0.9400);">lnk</div>
<div class="t" style="left:171px;top:690px;width:300px;text-align:right;transform-origin:100% 0;transform:scaleX(0.94);">1 060</div>
<div class="t" style="left:479px;top:690px;transform:scaleX(0.9400);">18.09.2018 13:41</div>
<svg style="left:-5px;top:716px" width="23" height="23" viewBox="0 0 23 23"><rect x="5.5" y="0.5" width="12" height="21" fill="#d8d0b0" stroke="#777" stroke-width="1"/><circle cx="11.5" cy="14.5" r="5.3" fill="#1a1a1a"/><circle cx="11.5" cy="14.5" r="2" fill="#9a9a9a"/><circle cx="11.5" cy="6" r="3" fill="#222"/><path d="M3 1 L6 7 L3 14" stroke="#111" stroke-width="2.5" fill="none"/></svg>
<div class="t" style="left:20px;top:715px;transform:scaleX(0.94)"><span class="lat">d</span>B<span class="lat">poweramp</span></div>
<div class="t" style="left:330px;top:715px;transform:scaleX(0.9400);">lnk</div>
<div class="t" style="left:171px;top:715px;width:300px;text-align:right;transform-origin:100% 0;transform:scaleX(0.94);">913</div>
<div class="t" style="left:479px;top:715px;transform:scaleX(0.9400);">18.09.2018 13:41</div>
<svg style="left:-5px;top:741px" width="23" height="23" viewBox="0 0 23 23"><rect x="1" y="0.5" width="21" height="22" rx="3" fill="#fafafa" stroke="#bcbcbc" stroke-width="1"/><path d="M2 3 Q16 2 21 19 L11 19Z" fill="#e03822"/><path d="M2 3 Q7 3 10 10 L6 14Z" fill="#3aa83a"/><path d="M4 2 L7 0" stroke="#3aa83a" stroke-width="1.5"/></svg>
<div class="t" style="left:20px;top:740px;transform:scaleX(0.94)">F<span class="lat">ast</span>S<span class="lat">tone</span> C<span class="lat">apture</span></div>
<div class="t" style="left:330px;top:740px;transform:scaleX(0.9400);">lnk</div>
<div class="t" style="left:171px;top:740px;width:300px;text-align:right;transform-origin:100% 0;transform:scaleX(0.94);">1 144</div>
<div class="t" style="left:479px;top:740px;transform:scaleX(0.9400);">18.09.2018 13:41</div>
<svg style="left:-5px;top:766px" width="23" height="23" viewBox="0 0 23 23"><rect x="0.5" y="0" width="22" height="22.5" rx="3" fill="#f2c818" stroke="#d8a800" stroke-width="0.8"/><circle cx="11.5" cy="8.5" r="6.5" fill="#fff"/><circle cx="11.5" cy="8.5" r="5" fill="#f2c818" fill-opacity="0.25"/><path d="M9.5 5.5 L15 8.5 L9.5 11.5Z" fill="#f0b000"/><text x="11.5" y="20.5" font-size="6" font-style="italic" text-anchor="middle" font-family="Liberation Sans" fill="#333">Player</text></svg>
<div class="t" style="left:20px;top:765px;transform:scaleX(0.94)">P<span class="lat">ot</span>P<span class="lat">layer</span> 64 <span class="lat">bit</span></div>
<div class="t" style="left:330px;top:765px;transform:scaleX(0.9400);">lnk</div>
<div class="t" style="left:171px;top:765px;width:300px;text-align:right;transform-origin:100% 0;transform:scaleX(0.94);">1 062</div>
<div class="t" style="left:479px;top:765px;transform:scaleX(0.9400);">18.09.2018 13:41</div>
<svg style="left:-5px;top:791px" width="23" height="23" viewBox="0 0 23 23"><rect x="0.5" y="0" width="22" height="22.5" rx="3" fill="#e04a2a"/><rect x="2" y="1" width="19" height="10" rx="2" fill="#f06040" fill-opacity="0.6"/><circle cx="11" cy="11" r="7" fill="none" stroke="#fff" stroke-width="1.8"/><path d="M11 6 v7" stroke="#fff" stroke-width="2"/></svg>
<div class="t" style="left:20px;top:790px;transform:scaleX(0.94)">OTK</div>
<div class="t" style="left:330px;top:790px;transform:scaleX(0.9400);">lnk</div>
<div class="t" style="left:171px;top:790px;width:300px;text-align:right;transform-origin:100% 0;transform:scaleX(0.94);">1 413</div>
<div class="t" style="left:479px;top:790px;transform:scaleX(0.9400);">18.09.2018 13:41</div>
<svg style="left:-5px;top:816px" width="23" height="23" viewBox="0 0 23 23"><path d="M6.5 4.5 H21.5 V21.5 H4.5 V18" fill="#fdfdfd" stroke="#9a9a9a" stroke-width="1"/><path d="M17 8h3M16 11h4M15 14h5M14 17h6" stroke="#aaa" stroke-width="0.8"/><path d="M3 1 L21 1 L13 17.5 L-2 17.5 Z" fill="#9cd9a0"/><path d="M3 1 L21 1 L17 9 L1 9Z" fill="#c2ebc4"/><path d="M3 1 L21 1 L19.5 4 L2 4Z" fill="#daf4da"/><path d="M3 1 L21 1 L13 17.5" stroke="#2a9a3a" stroke-width="1.2" fill="none" stroke-dasharray="1.3 0.7"/></svg>
<div class="t" style="left:20px;top:815px;transform:scaleX(0.94)">A<span class="lat">kel</span>P<span class="lat">ad</span></div>
<div class="t" style="left:330px;top:815px;transform:scaleX(0.9400);">lnk</div>
<div class="t" style="left:171px;top:815px;width:300px;text-align:right;transform-origin:100% 0;transform:scaleX(0.94);">597</div>
<div class="t" style="left:479px;top:815px;transform:scaleX(0.9400);">18.09.2018 13:41</div>
<svg style="left:-5px;top:841px" width="23" height="23" viewBox="0 0 23 23"><path d="M0 0 L23 0 L23 9 Z" fill="#e83838"/><path d="M0 0 L12 0 L0 9Z" fill="#f08080"/><path d="M0 18 L0 23 L23 23 Z" fill="#50c050"/><path d="M0 23 L10 23 L0 14Z" fill="#a0e8a0"/><path d="M1 10 L10 6 L22 10 L22 16 L12 20 L1 16Z" fill="#d0d0d0" stroke="#555" stroke-width="0.9"/><path d="M1 10 L12 14 L22 10" stroke="#777" stroke-width="0.9" fill="none"/><path d="M12 14 L12 20" stroke="#888" stroke-width="0.6"/><circle cx="18" cy="14.5" r="1.5" fill="#333"/></svg>
<div class="t" style="left:20px;top:840px;transform:scaleX(0.94)">H<span class="lat">ard</span> D<span class="lat">isk</span> S<span class="lat">entinel</span></div>
<div class="t" style="left:330px;top:840px;transform:scaleX(0.9400);">lnk</div>
<div class="t" style="left:171px;top:840px;width:300px;text-align:right;transform-origin:100% 0;transform:scaleX(0.94);">1 156</div>
<div class="t" style="left:479px;top:840px;transform:scaleX(0.9400);">18.09.2018 13:41</div>
<div style="left:-8px;top:864px;width:636px;height:1px;background:#d0d0d0"></div>
<div class="t" style="left:-7px;top:863px;transform:scaleX(0.9597);">0 Кб из 551 072 Кб, файлов: 0 из 61, папок: 0 из 2</div>
<div style="left:633px;top:117px;width:637px;height:1px;background:#a0a0a0"></div>
<div style="left:633px;top:887px;width:637px;height:1px;background:#a0a0a0"></div>
<div style="left:633px;top:117px;width:1px;height:771px;background:#a0a0a0"></div>
<div style="left:1270px;top:117px;width:1px;height:771px;background:#a0a0a0"></div>
<div style="left:634px;top:139px;width:636px;height:1px;background:#a0a0a0"></div>
<div style="left:1122px;top:118px;width:148px;height:21px;background:#bcdcf4"></div>
<div class="t" style="left:637px;top:117px;transform:scaleX(0.9400);">Имя</div>
<div class="t" style="left:977px;top:117px;transform:scaleX(0.9400);">Тип</div>
<div class="t" style="left:1058px;top:117px;transform:scaleX(0.9400);">Размер</div>
<svg style="left:1124px;top:123px" width="9" height="12" viewBox="0 0 9 12"><path d="M4.5 2 V7" stroke="#000" stroke-width="2.2"/><path d="M0 6 H9 L4.5 11Z" fill="#000"/></svg>
<div class="t" style="left:1135px;top:117px;transform:scaleX(0.9400);">Дата</div>
<svg style="left:637px;top:141px" width="23" height="23" viewBox="0 0 23 23"><path d="M0 6.5 H13 V3 L22 10 L13 17 V13.5 H0 Z" fill="#1f9e22"/><path d="M0 6.5 H13 V3 L22 10 H0 Z" fill="#72d458"/><path d="M1 19.5 H15" stroke="#c5d9c5" stroke-width="1.4"/></svg>
<div class="t" style="left:662px;top:140px;transform:scaleX(0.94)">..</div>
<div class="t" style="left:1056px;top:140px;transform:scaleX(0.9729)">&lt;Папка&gt;</div>
<div class="t" style="left:1121px;top:140px;transform:scaleX(0.9400);">27.09.2018 02:35</div>
<svg style="left:637px;top:166px" width="23" height="23" viewBox="0 0 23 23"><path d="M1 0.5 L12 1.5 L15.5 4 L15.5 14 L17 15 L17 21.5 L1 18.5 Z" fill="#f0cf6e" stroke="#d8b55a" stroke-width="0.6"/><path d="M2 2 L11 3 L14 5.5 L14 17 L2 16 Z" fill="#f7e3a0"/><path d="M4 4 L10 5 L12 17 L4 16Z" fill="#fbeebf" fill-opacity="0.7"/><ellipse cx="18" cy="21" rx="3" ry="1.4" fill="#c4c4c4"/></svg>
<div class="t" style="left:662px;top:165px;transform:scaleX(0.94)"><span class="cyr">референсы</span></div>
<div class="t" style="left:1056px;top:165px;transform:scaleX(0.9729)">&lt;Папка&gt;</div>
<div class="t" style="left:1121px;top:165px;transform:scaleX(0.9400);">27.09.2018 04:50</div>
<svg style="left:637px;top:191px" width="23" height="23" viewBox="0 0 23 23"><path d="M1 0.5 L12 1.5 L15.5 4 L15.5 14 L17 15 L17 21.5 L1 18.5 Z" fill="#f0cf6e" stroke="#d8b55a" stroke-width="0.6"/><path d="M2 2 L11 3 L14 5.5 L14 17 L2 16 Z" fill="#f7e3a0"/><path d="M4 4 L10 5 L12 17 L4 16Z" fill="#fbeebf" fill-opacity="0.7"/><ellipse cx="18" cy="21" rx="3" ry="1.4" fill="#c4c4c4"/></svg>
<div class="t" style="left:662px;top:190px;transform:scaleX(0.94)">В<span class="cyr">се</span> <span class="cyr">песни</span> А<span class="cyr">натолия</span> Н<span class="cyr">агорова</span>_MP3 <span class="cyr">для</span> <span class="cyr">моб</span> <span class="cyr">тел</span></div>
<div class="t" style="left:1056px;top:190px;transform:scaleX(0.9729)">&lt;Папка&gt;</div>
<div class="t" style="left:1121px;top:190px;transform:scaleX(0.9400);">18.09.2018 10:34</div>
<svg style="left:637px;top:216px" width="23" height="23" viewBox="0 0 23 23"><circle cx="10.5" cy="9.5" r="8.5" fill="#2a6a9a"/><path d="M3 7 q4 -5 9 -3 q-2 4 -5 4 q-2 2 -1 6 q-3 -2 -3 -7z" fill="#9ad8f0"/><path d="M13 8 q4 1 5 5 q-3 2 -5 0z" fill="#6ab8e0"/><circle cx="7" cy="5" r="2" fill="#fff" fill-opacity="0.5"/><path d="M16 9 v10" stroke="#1a7ad8" stroke-width="1.8"/><ellipse cx="13.5" cy="19" rx="3.2" ry="2.4" fill="#1a7ad8"/><path d="M16 9 q5 1 5 6" stroke="#1a7ad8" stroke-width="1.8" fill="none"/></svg>
<div class="t" style="left:662px;top:215px;transform:scaleX(0.94)">В<span class="cyr">се</span> <span class="cyr">песни</span> А<span class="cyr">натолия</span> Н<span class="cyr">агорова</span>_MP3</div>
<div class="t" style="left:1056px;top:215px;transform:scaleX(0.9729)">&lt;Папка&gt;</div>
<div class="t" style="left:1121px;top:215px;transform:scaleX(0.9400);">14.09.2018 05:56</div>
<svg style="left:637px;top:241px" width="23" height="23" viewBox="0 0 23 23"><path d="M1 0.5 L12 1.5 L15.5 4 L15.5 14 L17 15 L17 21.5 L1 18.5 Z" fill="#f0cf6e" stroke="#d8b55a" stroke-width="0.6"/><path d="M2 2 L11 3 L14 5.5 L14 17 L2 16 Z" fill="#f7e3a0"/><path d="M4 4 L10 5 L12 17 L4 16Z" fill="#fbeebf" fill-opacity="0.7"/><ellipse cx="18" cy="21" rx="3" ry="1.4" fill="#c4c4c4"/></svg>
<div class="t" style="left:662px;top:240px;transform:scaleX(0.94)">Р<span class="cyr">ингтоны</span></div>
<div class="t" style="left:1056px;top:240px;transform:scaleX(0.9729)">&lt;Папка&gt;</div>
<div class="t" style="left:1121px;top:240px;transform:scaleX(0.9400);">03.09.2018 16:35</div>
<svg style="left:637px;top:266px" width="23" height="23" viewBox="0 0 23 23"><rect x="0.5" y="0.5" width="22" height="21.5" rx="3.5" fill="#7e8a5c"/><text x="11.5" y="12.8" font-size="5.5" text-anchor="middle" font-family="Liberation Sans" fill="#fff" fill-opacity="0.72" letter-spacing="0.4">WAV</text></svg>
<div class="t" style="left:662px;top:265px;transform:scaleX(0.94)">GIMN INVALIDOV <span class="lat">minus</span> <span class="lat">dlya</span> <span class="lat">vocala</span> <span class="lat">snare</span> B..</div>
<div class="t" style="left:972px;top:265px;transform:scaleX(0.9400);">wav</div>
<div class="t" style="left:813px;top:265px;width:300px;text-align:right;transform-origin:100% 0;transform:scaleX(0.94);">48 468 358</div>
<div class="t" style="left:1121px;top:265px;transform:scaleX(0.9400);">18.09.2018 21:21</div>
<svg style="left:637px;top:291px" width="23" height="23" viewBox="0 0 23 23"><rect x="-0.5" y="-0.5" width="24" height="24" rx="4" fill="#f3c812"/><circle cx="11.5" cy="11.5" r="8" fill="#f4f4f4"/><path d="M9 7 L16 11.5 L9 16Z" fill="#f3c812"/></svg>
<div class="t" style="left:662px;top:290px;transform:scaleX(0.94)">Д<span class="cyr">енис</span> К<span class="cyr">лявер</span> — К<span class="cyr">огда</span> <span class="cyr">ты</span> <span class="cyr">станешь</span> <span class="cyr">больш</span>..</div>
<div class="t" style="left:972px;top:290px;transform:scaleX(0.9400);">mp4</div>
<div class="t" style="left:813px;top:290px;width:300px;text-align:right;transform-origin:100% 0;transform:scaleX(0.94);">45 132 870</div>
<div class="t" style="left:1121px;top:290px;transform:scaleX(0.9400);">15.09.2018 21:01</div>
<svg style="left:637px;top:316px" width="23" height="23" viewBox="0 0 23 23"><rect x="0.5" y="0.5" width="22" height="21.5" rx="3.5" fill="#bb4b4b"/><text x="11.5" y="12.8" font-size="5.5" text-anchor="middle" font-family="Liberation Sans" fill="#fff" fill-opacity="0.72" letter-spacing="0.4">MP3</text></svg>
<div class="t" style="left:662px;top:315px;transform:scaleX(0.94)"><span class="cyr">игорь</span>-<span class="cyr">николаев</span>-<span class="cyr">такси</span>-<span class="cyr">такси</span></div>
<div class="t" style="left:972px;top:315px;transform:scaleX(0.9400);">mp3</div>
<div class="t" style="left:813px;top:315px;width:300px;text-align:right;transform-origin:100% 0;transform:scaleX(0.94);">2 669 465</div>
<div class="t" style="left:1121px;top:315px;transform:scaleX(0.9400);">03.09.2018 16:04</div>
<svg style="left:637px;top:341px" width="23" height="23" viewBox="0 0 23 23"><rect x="0.5" y="0.5" width="22" height="21.5" rx="3.5" fill="#bb4b4b"/><text x="11.5" y="12.8" font-size="5.5" text-anchor="middle" font-family="Liberation Sans" fill="#fff" fill-opacity="0.72" letter-spacing="0.4">MP3</text></svg>
<div class="t" style="left:662px;top:340px;transform:scaleX(0.94)">K<span class="lat">ristina</span>_O<span class="lat">rbakajte</span>_-_G<span class="lat">nomik</span>_(S<span class="lat">ong</span>H<span class="lat">ouse</span>.<span class="lat">me</span>)</div>
<div class="t" style="left:972px;top:340px;transform:scaleX(0.9400);">mp3</div>
<div class="t" style="left:813px;top:340px;width:300px;text-align:right;transform-origin:100% 0;transform:scaleX(0.94);">4 395 568</div>
<div class="t" style="left:1121px;top:340px;transform:scaleX(0.9400);">03.09.2018 16:01</div>
<svg style="left:637px;top:366px" width="23" height="23" viewBox="0 0 23 23"><rect x="0.5" y="0.5" width="22" height="21.5" rx="3.5" fill="#bb4b4b"/><text x="11.5" y="12.8" font-size="5.5" text-anchor="middle" font-family="Liberation Sans" fill="#fff" fill-opacity="0.72" letter-spacing="0.4">MP3</text></svg>
<div class="t" style="left:662px;top:365px;transform:scaleX(0.94)">D<span class="lat">iskoteka</span>_80-90-KH_-_L<span class="lat">una</span>-L<span class="lat">una</span>(<span class="lat">uzimusic</span>.<span class="lat">ru</span>)</div>
<div class="t" style="left:972px;top:365px;transform:scaleX(0.9400);">mp3</div>
<div class="t" style="left:813px;top:365px;width:300px;text-align:right;transform-origin:100% 0;transform:scaleX(0.94);">6 432 256</div>
<div class="t" style="left:1121px;top:365px;transform:scaleX(0.9400);">03.09.2018 05:07</div>
<svg style="left:637px;top:391px" width="23" height="23" viewBox="0 0 23 23"><path d="M2 11 h19 v10 h-19z" fill="#c49a5a"/><path d="M2 11 L5 8 h13 l3 3z" fill="#e6c28a"/><rect x="8" y="13" width="7" height="2" fill="#8a6030"/><path d="M2 16h19" stroke="#a87a40" stroke-width="0.6"/><path d="M8 0.5 h7 v6 h4 l-7.5 7 l-7.5 -7 h4z" fill="#4cb040"/><path d="M8 0.5 h7 v3 h-7z" fill="#8ae070"/></svg>
<div class="t" style="left:662px;top:390px;transform:scaleX(0.94)">В<span class="cyr">се</span> <span class="cyr">песни</span> А<span class="cyr">натолия</span> Н<span class="cyr">агорова</span>_MP3</div>
<div class="t" style="left:972px;top:390px;transform:scaleX(0.9400);">rar</div>
<div class="t" style="left:813px;top:390px;width:300px;text-align:right;transform-origin:100% 0;transform:scaleX(0.94);">199 447 883</div>
<div class="t" style="left:1121px;top:390px;transform:scaleX(0.9400);">30.08.2018 18:06</div>
<svg style="left:637px;top:416px" width="23" height="23" viewBox="0 0 23 23"><rect x="0.5" y="0.5" width="22" height="21.5" rx="3.5" fill="#bb4b4b"/><text x="11.5" y="12.8" font-size="5.5" text-anchor="middle" font-family="Liberation Sans" fill="#fff" fill-opacity="0.72" letter-spacing="0.4">MP3</text></svg>
<div class="t" style="left:662px;top:415px;transform:scaleX(0.94)">G<span class="lat">iimn</span> TIRUS P<span class="lat">lus</span> M<span class="lat">aster</span> 3</div>
<div class="t" style="left:972px;top:415px;transform:scaleX(0.9400);">mp3</div>
<div class="t" style="left:813px;top:415px;width:300px;text-align:right;transform-origin:100% 0;transform:scaleX(0.94);">6 654 102</div>
<div class="t" style="left:1121px;top:415px;transform:scaleX(0.9400);">29.08.2018 18:49</div>
<svg style="left:637px;top:441px" width="23" height="23" viewBox="0 0 23 23"><rect x="0.5" y="0.5" width="22" height="21.5" rx="3.5" fill="#bb4b4b"/><text x="11.5" y="12.8" font-size="5.5" text-anchor="middle" font-family="Liberation Sans" fill="#fff" fill-opacity="0.72" letter-spacing="0.4">MP3</text></svg>
<div class="t" style="left:662px;top:440px;transform:scaleX(0.94)">6-8</div>
<div class="t" style="left:972px;top:440px;transform:scaleX(0.9400);">mp3</div>
<div class="t" style="left:813px;top:440px;width:300px;text-align:right;transform-origin:100% 0;transform:scaleX(0.94);">2 410 578</div>
<div class="t" style="left:1121px;top:440px;transform:scaleX(0.9400);">29.08.2018 05:18</div>
<svg style="left:637px;top:466px" width="23" height="23" viewBox="0 0 23 23"><rect x="0.5" y="0.5" width="22" height="21.5" rx="3.5" fill="#bb4b4b"/><text x="11.5" y="12.8" font-size="5.5" text-anchor="middle" font-family="Liberation Sans" fill="#fff" fill-opacity="0.72" letter-spacing="0.4">MP3</text></svg>
<div class="t" style="left:662px;top:465px;transform:scaleX(0.94)">B<span class="lat">lues</span>S<span class="lat">chnaps</span></div>
<div class="t" style="left:972px;top:465px;transform:scaleX(0.9400);">mp3</div>
<div class="t" style="left:813px;top:465px;width:300px;text-align:right;transform-origin:100% 0;transform:scaleX(0.94);">418 296</div>
<div class="t" style="left:1121px;top:465px;transform:scaleX(0.9400);">01.08.2018 08:04</div>
<svg style="left:637px;top:491px" width="23" height="23" viewBox="0 0 23 23"><rect x="0.5" y="0.5" width="22" height="21.5" rx="3.5" fill="#bb4b4b"/><text x="11.5" y="12.8" font-size="5.5" text-anchor="middle" font-family="Liberation Sans" fill="#fff" fill-opacity="0.72" letter-spacing="0.4">MP3</text></svg>
<div class="t" style="left:662px;top:490px;transform:scaleX(0.94)">21-Я <span class="cyr">одинок</span>-П<span class="cyr">оёт</span> С<span class="cyr">ергей</span> Н<span class="cyr">агоров</span>-<span class="cyr">старая</span></div>
<div class="t" style="left:972px;top:490px;transform:scaleX(0.9400);">mp3</div>
<div class="t" style="left:813px;top:490px;width:300px;text-align:right;transform-origin:100% 0;transform:scaleX(0.94);">8 176 175</div>
<div class="t" style="left:1121px;top:490px;transform:scaleX(0.9400);">24.11.2016 17:32</div>
<svg style="left:637px;top:516px" width="23" height="23" viewBox="0 0 23 23"><rect x="0.5" y="0.5" width="22" height="21.5" rx="3.5" fill="#7e8a5c"/><text x="11.5" y="12.8" font-size="5.5" text-anchor="middle" font-family="Liberation Sans" fill="#fff" fill-opacity="0.72" letter-spacing="0.4">WAV</text></svg>
<div class="t" style="left:662px;top:515px;transform:scaleX(0.94)">01 К<span class="cyr">илемарский</span> <span class="cyr">вальс</span></div>
<div class="t" style="left:972px;top:515px;transform:scaleX(0.9400);">wav</div>
<div class="t" style="left:813px;top:515px;width:300px;text-align:right;transform-origin:100% 0;transform:scaleX(0.94);">44 429 240</div>
<div class="t" style="left:1121px;top:515px;transform:scaleX(0.9400);">09.08.2014 14:42</div>
<svg style="left:637px;top:541px" width="23" height="23" viewBox="0 0 23 23"><rect x="0.5" y="0.5" width="22" height="21.5" rx="3.5" fill="#7e8a5c"/><text x="11.5" y="12.8" font-size="5.5" text-anchor="middle" font-family="Liberation Sans" fill="#fff" fill-opacity="0.72" letter-spacing="0.4">WAV</text></svg>
<div class="t" style="left:662px;top:540px;transform:scaleX(0.94)">05 М<span class="cyr">олевое</span> <span class="cyr">озеро</span></div>
<div class="t" style="left:972px;top:540px;transform:scaleX(0.9400);">wav</div>
<div class="t" style="left:813px;top:540px;width:300px;text-align:right;transform-origin:100% 0;transform:scaleX(0.94);">26 895 164</div>
<div class="t" style="left:1121px;top:540px;transform:scaleX(0.9400);">06.08.2014 09:33</div>
<div style="left:634px;top:864px;width:636px;height:1px;background:#d0d0d0"></div>
<div class="t" style="left:635px;top:863px;transform:scaleX(0.9597);">0 Кб из 386 259 Кб, файлов: 0 из 12, папок: 0 из 4</div>
<div style="left:612px;top:157px;width:15px;height:302px;background:#cdcdcd"></div>
<svg style="left:615px;top:145px" width="9" height="8" viewBox="0 0 9 8"><path d="M1 6.5 L4.5 2.5 L8 6.5" stroke="#606060" stroke-width="1.8" fill="none"/></svg>
<svg style="left:615px;top:852px" width="9" height="8" viewBox="0 0 9 8"><path d="M1 1.5 L4.5 5.5 L8 1.5" stroke="#606060" stroke-width="1.8" fill="none"/></svg>
<div style="left:634px;top:265px;width:640px;height:25px;border:1px solid #3a7be4;box-sizing:border-box"></div>
<div class="b" style="left:327px;top:894px;letter-spacing:0.2px;">d:<svg style="display:inline-block;vertical-align:-3px;margin:0 0.5px" width="7" height="13" viewBox="0 0 7 13"><path d="M1 0.5 L6 12.5" stroke="#000" stroke-width="2.2"/></svg>Musika&gt;</div>
<div style="left:418px;top:891px;width:900px;height:40px;border:1px solid #646464;box-sizing:border-box;background:#f5f5f5"></div>
</body></html>
